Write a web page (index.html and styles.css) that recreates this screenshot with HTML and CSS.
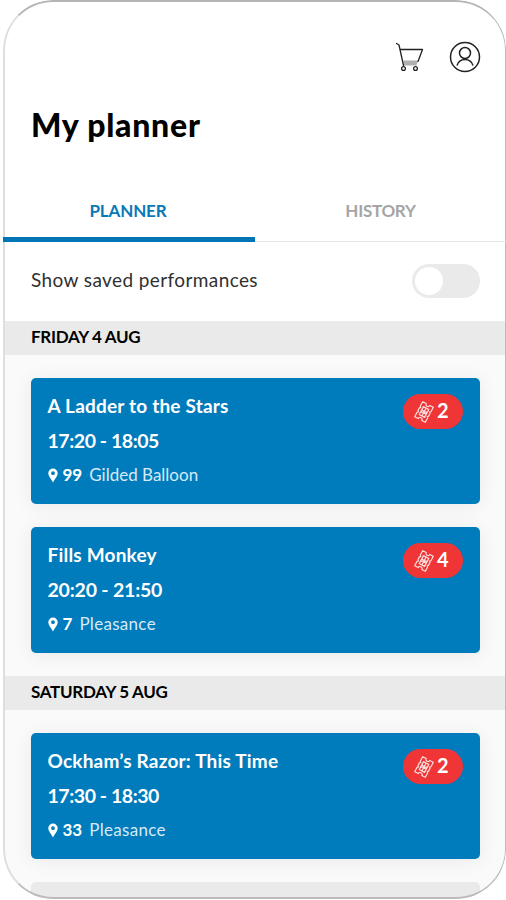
FILE: index.html
```html
<!DOCTYPE html>
<html lang="en">
<head>
<meta charset="utf-8">
<title>My planner</title>
<link rel="stylesheet" href="styles.css">
</head>
<body>
<svg class="defs" width="0" height="0" aria-hidden="true">
  <symbol id="pin" viewBox="0 0 10 15"><path fill="#fff" fill-rule="evenodd" d="M5 .5A4.7 4.7 0 0 0 .3 5.2C.3 8.2 3.400 11 5 14.500 6.600 11 9.700 8.200 9.700 5.200A4.700 4.700 0 0 0 5 .5ZM5 3.300a1.900 1.900 0 1 1 0 3.800 1.900 1.900 0 0 1 0-3.800Z"/></symbol>
  <symbol id="ticket" viewBox="0 0 20 22"><g fill="none" stroke="#fff" stroke-opacity=".85" stroke-width="1.200" stroke-linejoin="round" transform="rotate(28 10 11)"><path d="M4 2.500h4a2 2 0 0 0 4 0h4v5l-1 1 1 1v3l-1 1 1 1v5h-4a2 2 0 0 0-4 0H4v-5l1-1-1-1v-3l1-1-1-1Z"/><path d="M7 6.500h6v9H7zM7 9.500l6 3M7 12.500l6-3M10 6.500v9"/></g></symbol>
</svg>
<main class="phone">
  <header class="top">
    <nav class="actions">
      <svg class="cart" width="30" height="30" viewBox="0 0 30 30"><path class="basket" d="M8.300 18.500H23L21.500 23.500H9z"/><g fill="none" stroke="#222" stroke-width="1.300" stroke-linecap="round" stroke-linejoin="round"><path d="M1.500 1.500 4 3l4.500 20.500M5 7.500h22.500l-4.500 12"/><circle cx="8.500" cy="26.500" r="1.900"/><circle cx="20.500" cy="26.500" r="1.900"/></g></svg>
      <svg class="user" width="32" height="32" viewBox="0 0 32 32" fill="none" stroke="#222" stroke-width="1.500"><circle cx="16" cy="16" r="14.500"/><circle cx="16" cy="12" r="5.500"/><path d="M8 24.500a8.300 8.300 0 0 1 16 0"/></svg>
    </nav>
    <h1>My planner</h1>
  </header>
  <div class="tabs">
    <div class="tab active"><span>PLANNER</span></div>
    <div class="tab"><span class="history">HISTORY</span></div>
  </div>
  <div class="filter"><span>Show saved performances</span><i class="switch"></i></div>
  <h2>FRIDAY 4 AUG</h2>
  <section class="list">
    <article class="card">
      <div class="info"><h3>A Ladder to the Stars</h3><p class="time">17:20 - 18:05</p>
      <p class="venue"><svg class="pin"><use href="#pin"/></svg><b>99</b><span class="gilded">Gilded Balloon</span></p></div>
      <div class="badge"><svg class="ticket"><use href="#ticket"/></svg><b>2</b></div>
    </article>
    <article class="card">
      <div class="info"><h3>Fills Monkey</h3><p class="time wide">20:20 - 21:50</p>
      <p class="venue"><svg class="pin"><use href="#pin"/></svg><b>7</b><span>Pleasance</span></p></div>
      <div class="badge"><svg class="ticket"><use href="#ticket"/></svg><b>4</b></div>
    </article>
  </section>
  <h2>SATURDAY 5 AUG</h2>
  <section class="list">
    <article class="card">
      <div class="info"><h3>Ockham’s Razor: This Time</h3><p class="time">17:30 - 18:30</p>
      <p class="venue"><svg class="pin"><use href="#pin"/></svg><b>33</b><span>Pleasance</span></p></div>
      <div class="badge"><svg class="ticket"><use href="#ticket"/></svg><b>2</b></div>
    </article>
    <div class="next"></div>
  </section>
</main>
</body>
</html>
```

FILE: styles.css
```css
* { box-sizing: border-box; }
body { margin: 0; background: #fff; font-family: Lato, "Liberation Sans", sans-serif; color: #000; }
h1, h2, h3, p { margin: 0; }
.defs { display: block; height: 0; }
.phone { position: relative; width: 503px; height: 899px; margin-left: 3px; overflow: hidden; background: #fff; border-radius: 50px; }
.phone::after { content: ""; position: absolute; inset: 0; border: 1px solid #bababa; border-top: 2px solid #b5b5b5; border-bottom: 2px solid #bcbcbc; border-left: 2px solid #dedede; border-radius: 50px; pointer-events: none; }
.top { height: 181px; padding: 41px 25px 0 28px; }
.actions { display: flex; justify-content: flex-end; gap: 24px; height: 32px; }
.cart { margin-top: 1px; }
.basket { fill: #b0b0b0; }
h1 { margin-top: 32px; font-size: 32px; line-height: 40px; font-weight: 900; white-space: nowrap; letter-spacing: .75px; }
.tabs { position: relative; z-index: 1; display: grid; grid-template-columns: 252px 1fr; height: 61px; }
.tab { display: flex; justify-content: center; padding-top: 19px; border-bottom: 1px solid #e8e8e8; font-size: 17px; font-weight: 700; line-height: 22px; letter-spacing: -.15px; color: #a5a5a5; }
.tab.active { padding-right: 2px; color: #0878b8; border-bottom: 5px solid #0075b5; }
.history { letter-spacing: -.3px; }
.filter { display: flex; justify-content: space-between; height: 79px; padding: 22px 26px 0 28px; font-size: 19px; line-height: 32px; letter-spacing: .4px; color: #303030; }
.switch { width: 68px; height: 34px; border-radius: 17px; background: #eaeaea; }
.switch::before { content: ""; display: block; width: 28px; height: 28px; margin: 3px; border-radius: 50%; background: #fff; }
h2 { height: 34px; padding-left: 28px; background: #eaeaea; font-size: 17px; line-height: 32px; font-weight: 700; letter-spacing: -.3px; white-space: nowrap; }
.list { padding: 23px 26px 23px 27.500px; background: #fafafa; display: grid; gap: 23px; }
.card { display: flex; justify-content: space-between; height: 126px; padding: 16px 17px 0 17px; border-radius: 5px; background: #007bbb; color: #fff; box-shadow: 0 2px 20px rgba(0,0,0,.07); }
.info { white-space: nowrap; }
h3 { font-size: 19px; line-height: 24px; font-weight: 700; letter-spacing: .2px; }
.time { margin-top: 10px; font-size: 19.500px; line-height: 26px; font-weight: 700; letter-spacing: -.45px; }
.wide { letter-spacing: -.2px; }
.venue { display: flex; align-items: center; margin-top: 8px; font-size: 17px; line-height: 26px; }
.venue span { margin-left: 7px; color: #d6eaf7; letter-spacing: .3px; }
.venue .gilded { letter-spacing: 0; }
.pin { width: 10px; height: 15px; margin-right: 5px; }
.badge { display: flex; align-items: center; width: 60px; height: 35px; padding-left: 11px; border-radius: 18px; background: #ef3535; }
.badge b { margin: 0 0 4px 3px; font-size: 20px; line-height: 24px; }
.ticket { width: 20px; height: 22px; }
.next { height: 30px; border-radius: 5px; background: #eaeaea; }
```
